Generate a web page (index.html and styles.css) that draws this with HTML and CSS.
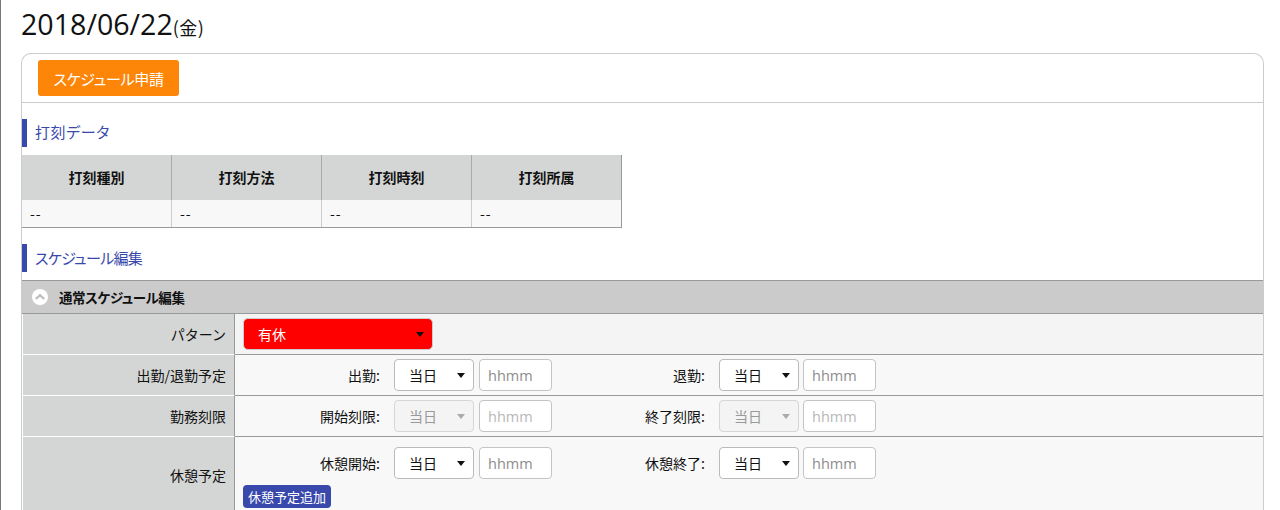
FILE: index.html
```html
<!DOCTYPE html>
<html lang="ja">
<head>
<meta charset="utf-8">
<title>スケジュール</title>
<link rel="stylesheet" href="styles.css">
</head>
<body>
<div class="page">
  <h1 class="date">2018/06/22<small>(金)</small></h1>
  <div class="card">
    <div class="card-head"><button class="apply" type="button">スケジュール申請</button></div>
    <h2 class="section first">打刻データ</h2>
    <div class="stamp">
      <div class="th">打刻種別</div><div class="th">打刻方法</div><div class="th">打刻時刻</div><div class="th last">打刻所属</div>
      <div class="td">--</div><div class="td">--</div><div class="td">--</div><div class="td last">--</div>
    </div>
    <h2 class="section second">スケジュール編集</h2>
    <div class="panel">
      <div class="panel-head">
        <svg class="chev" width="16" height="16" viewBox="0 0 16 16"><circle cx="8" cy="8" r="8" fill="#fff"/><path d="M3.8 10 8 6.2 12.2 10" fill="none" stroke="#bbb" stroke-width="2.2"/></svg>
        通常スケジュール編集
      </div>
      <div class="row">
        <div class="key">パターン</div>
        <div class="val pattern-val">
          <div class="sel-wrap pattern"><select><option>有休</option></select></div>
        </div>
      </div>
      <div class="row">
        <div class="key">出勤/退勤予定</div>
        <div class="val">
          <div class="fields">
            <label class="lab lab-a">出勤:</label>
            <div class="sel-wrap"><select><option>当日</option></select></div>
            <input class="time t-a" placeholder="hhmm">
            <label class="lab lab-b">退勤:</label>
            <div class="sel-wrap"><select><option>当日</option></select></div>
            <input class="time t-b" placeholder="hhmm">
          </div>
        </div>
      </div>
      <div class="row">
        <div class="key">勤務刻限</div>
        <div class="val">
          <div class="fields">
            <label class="lab lab-a">開始刻限:</label>
            <div class="sel-wrap off"><select disabled><option>当日</option></select></div>
            <input class="time t-a dim" placeholder="hhmm">
            <label class="lab lab-b">終了刻限:</label>
            <div class="sel-wrap off"><select disabled><option>当日</option></select></div>
            <input class="time t-b dim" placeholder="hhmm">
          </div>
        </div>
      </div>
      <div class="row tall">
        <div class="key">休憩予定</div>
        <div class="val break-val">
          <div class="fields">
            <label class="lab lab-a">休憩開始:</label>
            <div class="sel-wrap"><select><option>当日</option></select></div>
            <input class="time t-a" placeholder="hhmm">
            <label class="lab lab-b">休憩終了:</label>
            <div class="sel-wrap"><select><option>当日</option></select></div>
            <input class="time t-b" placeholder="hhmm">
          </div>
          <button class="add" type="button">休憩予定追加</button>
        </div>
      </div>
    </div>
  </div>
</div>
</body>
</html>
```
FILE: styles.css
```css
* { box-sizing: border-box; }
html, body { margin: 0; height: 510px; overflow: hidden; background: #fff; }
body {
  font-family: "Noto Sans CJK JP", "Open Sans", sans-serif;
  font-size: 14px;
  color: #111;
}
.page {
  height: 510px;
  border-left: 1px solid #777;
  padding: 8px 16px 0 20px;
}
.date {
  margin: 0;
  height: 45px;
  font-family: "Open Sans", "Noto Sans CJK JP", sans-serif;
  font-size: 28.6px;
  font-weight: 400;
  line-height: 31px;
  color: #111;
}
.date small { font-size: 18px; letter-spacing: .4px; font-family: "Noto Sans CJK JP", sans-serif; }
.card {
  border: 1px solid #ccc;
  border-bottom: 0;
  border-radius: 10px 10px 0 0;
  height: 457px;
}
.card-head {
  height: 49px;
  padding: 6px 0 0 16px;
  border-bottom: 1px solid #ccc;
}
.apply {
  display: block;
  width: 141px;
  height: 36px;
  border: 0;
  border-radius: 3px;
  background: #fd8508;
  color: #fff;
  font: 400 15px/36px "Noto Sans CJK JP", sans-serif;
  font-feature-settings: "palt";
  letter-spacing: -.3px;
  padding: 1px 0 0;
}
.section {
  margin: 16px 0 8px;
  height: 28px;
  border-left: 5px solid #3949ab;
  padding-left: 8px;
  font-size: 15px;
  font-weight: 400;
  line-height: 27px;
  color: #3949ab;
  font-feature-settings: "palt";
}
.section.first { line-height: 26px; letter-spacing: .6px; }
.section.second { letter-spacing: -.7px; }
.stamp {
  display: grid;
  grid-template-columns: repeat(4, 150px);
  grid-template-rows: 45px 27px;
  width: 600px;
  border-bottom: 1px solid #999;
}
.th {
  background: #d4d6d5;
  border-right: 1px solid #aaa;
  text-align: center;
  font-weight: 700;
  font-size: 14px;
  line-height: 44px;
}
.td {
  background: #f8f8f8;
  border-right: 1px solid #ccc;
  padding-left: 8px;
  line-height: 26px;
  font-size: 14px;
  letter-spacing: 1px;
}
.th.last { border-right-color: #999; }
.td.last { border-right-color: #999; }
.panel { margin-top: 8px; }
.panel-head {
  display: flex;
  align-items: center;
  gap: 11px;
  height: 34px;
  padding-left: 10px;
  background: #cbcbcb;
  border-top: 1px solid #999;
  border-bottom: 1px solid #999;
  font-weight: 700;
  font-size: 13.5px;
  letter-spacing: -.4px;
  font-feature-settings: "palt";
}
.row {
  display: flex;
  height: 41px;
}
.key {
  flex: 0 0 212px;
  margin-left: 1px;
  border-bottom: 1px solid #fff;
  border-right: 1px solid #999;
  background: #d4d6d5;
  text-align: right;
  padding-right: 8px;
  line-height: 40px;
  font-size: 14px;
}
.val {
  flex: 1;
  background: #f8f8f8;
  border-bottom: 1px solid #999;
  min-width: 0;
}
.pattern-val { background: #f4f4f4; padding: 4px 0 0 8px; }
.fields {
  display: flex;
  align-items: flex-start;
  padding-top: 4px;
}
.lab {
  text-align: right;
  font-size: 14px;
  line-height: 32px;
}
.lab-a { width: 145px; margin-right: 14px; }
.lab-b { width: 153px; margin-right: 14px; }
.sel-wrap {
  position: relative;
  width: 80px;
  height: 32px;
}
.sel-wrap::after {
  content: "";
  position: absolute;
  right: 9px;
  top: 14px;
  border-left: 4px solid transparent;
  border-right: 4px solid transparent;
  border-top: 5px solid #111;
  pointer-events: none;
}
select {
  appearance: none;
  -webkit-appearance: none;
  display: block;
  width: 100%;
  height: 100%;
  border: 1px solid #bbb;
  border-radius: 4px;
  background: #fff;
  color: #111;
  padding: 0 0 0 14px;
  font: 400 14px "Noto Sans CJK JP", sans-serif;
  opacity: 1;
}
.off select { background: #f4f4f4; border-color: #d6d6d6; color: #999; }
.off::after { border-top-color: #aaa; }
.time {
  display: block;
  width: 73px;
  height: 32px;
  border: 1px solid #c4c4c4;
  border-radius: 4px;
  background: #fff;
  padding: 0 8px;
  font: 400 14.5px "Open Sans", sans-serif;
}
.t-a { margin-left: 5px; }
.t-b { margin-left: 4px; }
.time::placeholder { color: #8d8d8d; opacity: 1; }
.time.dim::placeholder { color: #b8b8b8; }
.sel-wrap.pattern { width: 190px; height: 32px; }
.pattern select {
  background: #f00;
  color: #fff;
  border-color: #ccc;
  border-radius: 5px;
}
.row.tall { height: 80px; }
.tall .key { line-height: 76px; border-bottom: 0; }
.tall .val { border-bottom: 0; }
.break-val .fields { padding-top: 10px; }
.add {
  display: block;
  margin: 6px 0 0 8px;
  height: 23px;
  width: 88px;
  border: 0;
  border-radius: 4px;
  background: #3949ab;
  color: #fff;
  padding: 0;
  font: 400 13px/23px "Noto Sans CJK JP", sans-serif;
}
```
